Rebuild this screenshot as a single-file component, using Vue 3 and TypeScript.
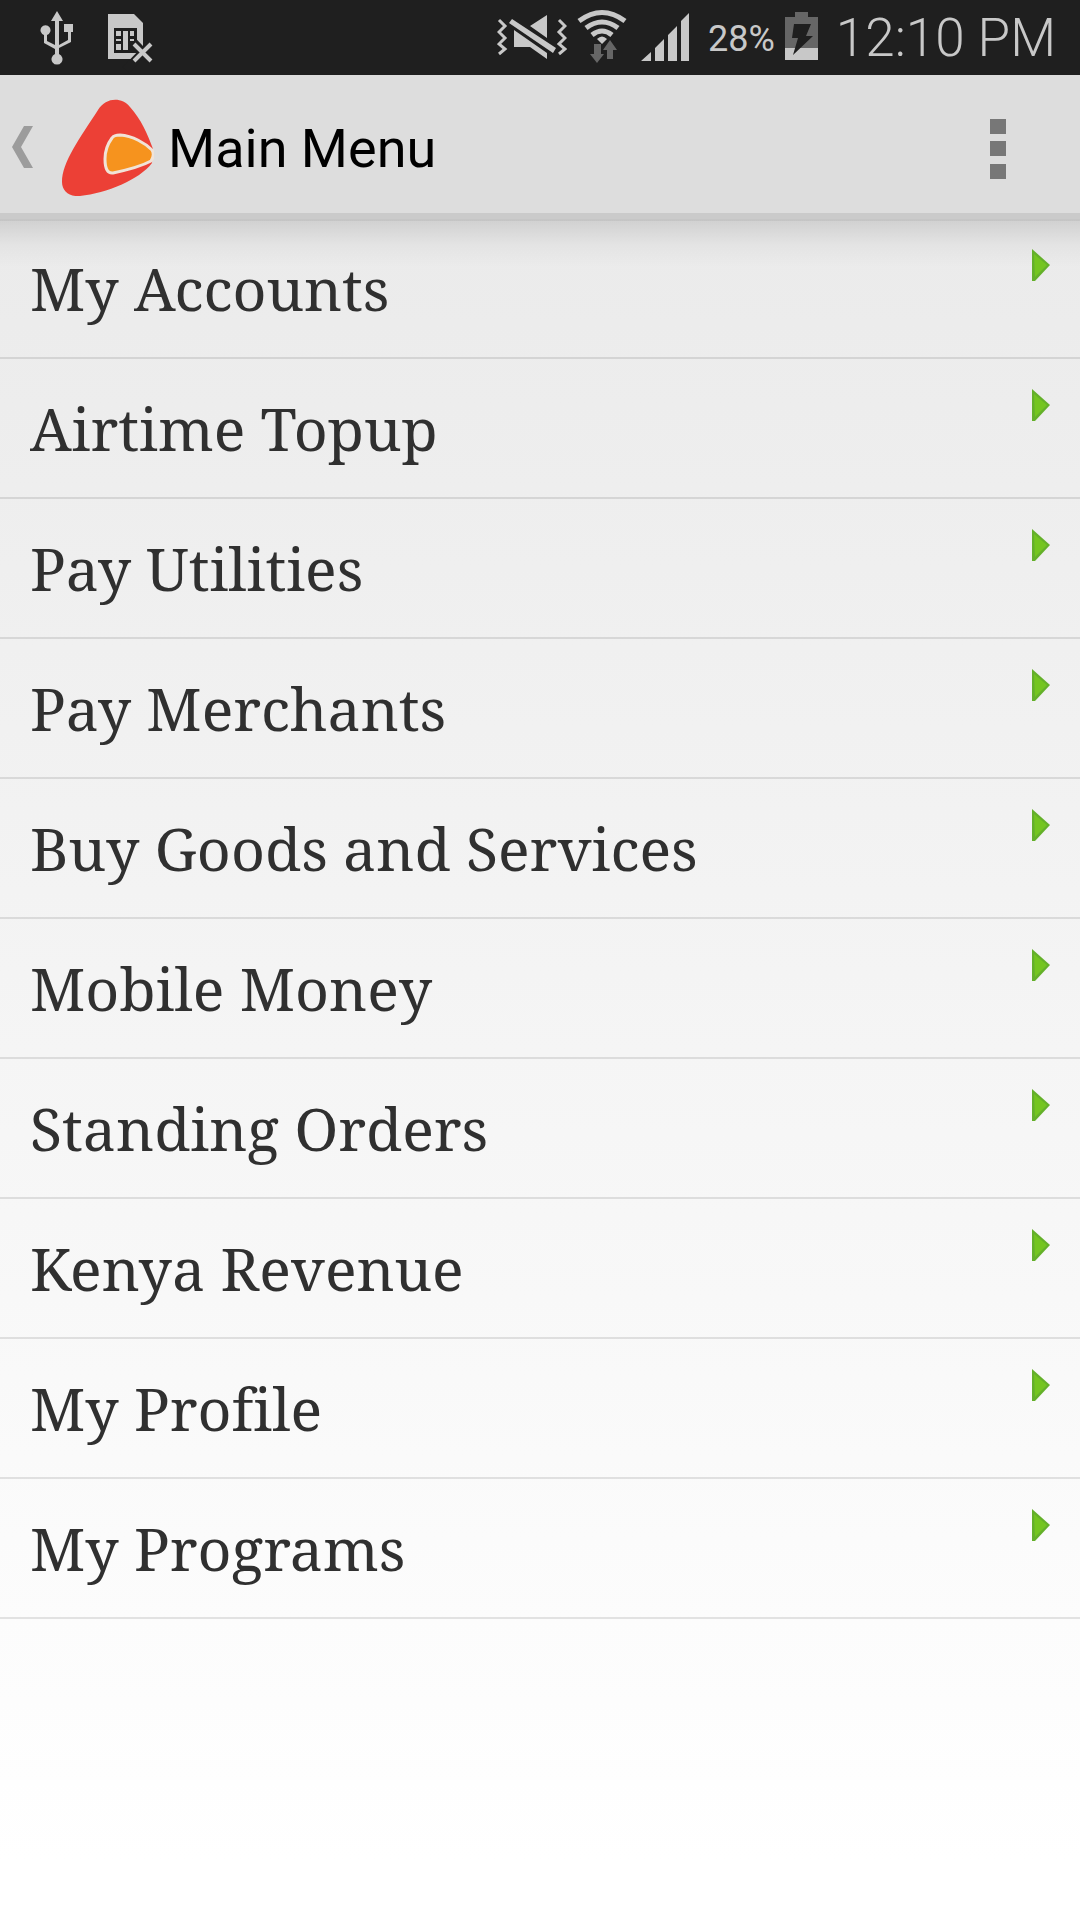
<script setup lang="ts">
interface MenuEntry {
  label: string
  href: string
}

const entries: MenuEntry[] = [
  { label: 'My Accounts', href: '#accounts' },
  { label: 'Airtime Topup', href: '#airtime' },
  { label: 'Pay Utilities', href: '#utilities' },
  { label: 'Pay Merchants', href: '#merchants' },
  { label: 'Buy Goods and Services', href: '#goods' },
  { label: 'Mobile Money', href: '#mobile-money' },
  { label: 'Standing Orders', href: '#standing-orders' },
  { label: 'Kenya Revenue', href: '#revenue' },
  { label: 'My Profile', href: '#profile' },
  { label: 'My Programs', href: '#programs' },
]
</script>

<template>
  <div class="screen">
    <div class="status">
      <div class="notices">
        <svg width="34" height="75" viewBox="40 0 34 75" fill="#c8c8c8" aria-label="USB connected">
          <path d="M57 11l6 10h-4v24l9-5v-8h-4v-8h9v8h-2v10l-12 6v6a5.500 5.500 0 1 1-4 0v-5l-11-6v-8a5 5 0 1 1 3 0v6l8 4V21h-4z" />
        </svg>
        <svg width="46" height="75" viewBox="108 0 46 75" aria-label="No SIM card">
          <path d="M108 14h26l9 9v36H108z" fill="#c8c8c8" />
          <path d="M114 28h23v25h-23z" fill="#1f1f1f" />
          <path d="M116 31h5v5h-5zm0 8h5v2h-5zm0 5h5v6h-5zm7-13h5v19h-5zm7 0h4v5h-4zm0 8h4v2h-4z" fill="#c8c8c8" />
          <path d="M133 42l18 19M151 44L126 70" stroke="#1f1f1f" stroke-width="9" />
          <path d="M134 44l17 17M151 44l-17 17" stroke="#c8c8c8" stroke-width="4" />
        </svg>
      </div>
      <div class="indicators">
        <svg width="70" height="75" viewBox="500 0 70 75" fill="#c8c8c8" aria-label="Sound off">
          <path d="M502 20l6 6-6 6 6 6-6 6 6 5-6 5M562 20l6 6-6 6 6 6-6 6 6 5-6 5" fill="none" stroke="#c8c8c8" stroke-width="3" />
          <path d="M550 15v23l-17-12zM517 30l33 23v6l-17-12h-16zM515 19l44 29-3 5-44-30z" />
        </svg>
        <svg width="50" height="75" viewBox="579 0 50 75" aria-label="Wi-Fi">
          <g fill="none" stroke="#c8c8c8" stroke-width="5">
            <path d="M581 21q23-17 46 0M588 28q16-12 32 0M594 35q10-8 20 0" />
          </g>
          <path d="M599 39q5-5 10 0l-5 5z" fill="#c8c8c8" />
          <path d="M596 44h7v10h3l-7 9-7-9h4zM609 59V50h-4l7-10 7 10h-4v9z" fill="#666" />
        </svg>
        <svg class="signal" width="49" height="75" viewBox="643 0 49 75" fill="#c8c8c8" aria-label="Signal strength">
          <path d="M643 61l10-9v9zM657 61V48l9-9v22zM670 61V35l9-9v35zM683 61V21l8-8v48z" />
        </svg>
        <span class="percent">28%</span>
        <svg width="33" height="75" viewBox="784 0 33 75" aria-label="Battery charging">
          <path d="M784 17h10v-5h13v5h10v31h-33z" fill="#666" />
          <path d="M784 48h33v12h-33z" fill="#c8c8c8" />
          <path d="M793 24h17l-5 12h7l-20 19 5-17h-6z" fill="#1f1f1f" />
        </svg>
        <time class="clock">12:10 PM</time>
      </div>
    </div>

    <header class="bar">
      <button class="home" type="button" aria-label="Back">
        <svg width="21" height="42" viewBox="0 0 21 42"><path d="M12 0h9L9 21l12 21h-9L0 21z" fill="#9c9c9c" /></svg>
        <svg width="92" height="97" viewBox="62 98 92 97">
          <path d="M62 181C62 161 80 137 98 109C106 96 122 96 130 106C141 118 148 134 153 148L152 162C139 179 107 192 80 195C69 196 62 190 62 181Z" fill="#ec4036" />
          <path d="M105 158C105 149 109 141 112 137Q114 134 120 134C133 135 145 142 152 149Q155 154 151 160C140 166 127 169 113 172Q105 173 105 158Z" fill="#f6931e" stroke="#f1e3d7" stroke-width="3" />
        </svg>
      </button>
      <h1>Main Menu</h1>
      <button class="more" type="button" aria-label="More options">
        <svg width="16" height="60" viewBox="0 0 16 60" fill="#777"><path d="M0 0h16v15H0zM0 22h16v15H0zM0 45h16v15H0z" /></svg>
      </button>
    </header>

    <nav class="menu">
      <a v-for="entry in entries" :key="entry.label" class="row" :href="entry.href">
        <span class="label">{{ entry.label }}</span>
        <svg class="arrow" width="18" height="32" viewBox="0 0 18 32">
          <path d="M0 0l18 16L3 32H0z" fill="#64b02a" />
          <path d="M2 5l13 11L3 28z" fill="#74c520" />
        </svg>
      </a>
    </nav>
  </div>
</template>

<style>
body {
  margin: 0;
}
</style>

<style scoped>
.screen {
  display: flex;
  flex-direction: column;
  min-height: 100vh;
  background: linear-gradient(#e8e8e8, #fff 97%);
  font-family: Roboto, sans-serif;
}
.status {
  display: flex;
  justify-content: space-between;
  height: 75px;
  padding: 0 24px 0 40px;
  background: #1f1f1f;
  color: #c8c8c8;
}
.notices {
  display: flex;
  gap: 34px;
}
.indicators {
  display: flex;
  align-items: center;
  gap: 10px;
}
.signal {
  margin-left: 4px;
}
.percent {
  margin-left: 8px;
  padding-top: 2px;
  font-size: 36px;
  line-height: 40px;
}
.clock {
  margin-left: 8px;
  font-size: 53px;
  font-weight: 300;
  line-height: 74px;
}
.bar {
  display: flex;
  align-items: center;
  box-sizing: border-box;
  height: 144px;
  padding: 6px 68px 0 12px;
  border-bottom: 6px solid #cacaca;
  background: #ddd;
}
button {
  display: flex;
  align-items: center;
  padding: 0;
  border: 0;
  background: none;
}
.home {
  gap: 29px;
}
h1 {
  flex: 1;
  margin: 0 0 0 14px;
  padding-top: 4px;
  color: #000;
  font-size: 54px;
  font-weight: 400;
  line-height: 64px;
}
.more {
  padding: 10px 6px 6px;
}
.menu {
  display: flex;
  flex-direction: column;
  background: linear-gradient(
    rgba(0, 0, 0, 0.16) 2px,
    rgba(0, 0, 0, 0.11) 2px,
    rgba(0, 0, 0, 0.03) 26px,
    transparent 48px
  );
}
.row {
  display: flex;
  justify-content: space-between;
  box-sizing: border-box;
  height: 140px;
  padding: 30px;
  border-bottom: 2px solid rgba(0, 0, 0, 0.1);
  color: #303030;
  text-decoration: none;
}
.label {
  font-family: "Noto Serif", "Droid Serif", "Liberation Serif", serif;
  font-size: 59px;
  font-variant-ligatures: none;
  line-height: 78px;
}
</style>
